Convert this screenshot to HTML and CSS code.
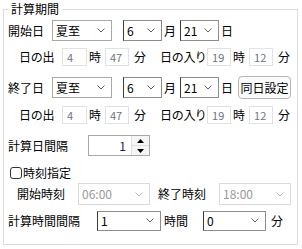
FILE: index.html
```html
<!DOCTYPE html>
<html lang="ja">
<head>
  <meta charset="UTF-8" />
  <title>計算期間</title>
  <link rel="stylesheet" href="styles.css">
</head>
<body>

<fieldset class="period">
  <legend>計算期間</legend>

  <div class="row date">
    <span class="label w-date">開始日</span>
    <span class="combo term"><span class="val">夏至</span><svg class="chev" width="8" height="5" viewBox="0 0 8 5"><path d="M0.5 0.5 L4 4 L7.5 0.5" /></svg></span>
    <span class="combo edit month"><span class="val">6</span><svg class="chev" width="8" height="5" viewBox="0 0 8 5"><path d="M0.5 0.5 L4 4 L7.5 0.5" /></svg></span>
    <span class="unit">月</span>
    <span class="combo edit day"><span class="val">21</span><svg class="chev" width="8" height="5" viewBox="0 0 8 5"><path d="M0.5 0.5 L4 4 L7.5 0.5" /></svg></span>
    <span class="unit">日</span>
  </div>

  <div class="row sun">
    <span class="label w-rise">日の出</span>
    <span class="numbox">4</span>
    <span class="unit">時</span>
    <span class="numbox">47</span>
    <span class="unit min">分</span>
    <span class="label w-set">日の入り</span>
    <span class="numbox">19</span>
    <span class="unit">時</span>
    <span class="numbox">12</span>
    <span class="unit min">分</span>
  </div>

  <div class="row date end">
    <span class="label w-date">終了日</span>
    <span class="combo term"><span class="val">夏至</span><svg class="chev" width="8" height="5" viewBox="0 0 8 5"><path d="M0.5 0.5 L4 4 L7.5 0.5" /></svg></span>
    <span class="combo edit month"><span class="val">6</span><svg class="chev" width="8" height="5" viewBox="0 0 8 5"><path d="M0.5 0.5 L4 4 L7.5 0.5" /></svg></span>
    <span class="unit">月</span>
    <span class="combo edit day"><span class="val">21</span><svg class="chev" width="8" height="5" viewBox="0 0 8 5"><path d="M0.5 0.5 L4 4 L7.5 0.5" /></svg></span>
    <span class="unit">日</span>
    <button class="btn">同日設定</button>
  </div>

  <div class="row sun last">
    <span class="label w-rise">日の出</span>
    <span class="numbox">4</span>
    <span class="unit">時</span>
    <span class="numbox">47</span>
    <span class="unit min">分</span>
    <span class="label w-set">日の入り</span>
    <span class="numbox">19</span>
    <span class="unit">時</span>
    <span class="numbox">12</span>
    <span class="unit min">分</span>
  </div>

  <div class="row interval">
    <span class="label w-interval">計算日間隔</span>
    <span class="spin">
      <span class="spin-val">1</span>
      <span class="spin-btns">
        <span class="spin-btn"><svg width="7" height="4" viewBox="0 0 7 4"><path d="M0 4 L3.5 0 L7 4 Z" /></svg></span>
        <span class="spin-btn"><svg width="7" height="4" viewBox="0 0 7 4"><path d="M0 0 L3.5 4 L7 0 Z" /></svg></span>
      </span>
    </span>
  </div>

  <label class="row check">
    <span class="box"></span>
    <span>時刻指定</span>
  </label>

  <div class="row time">
    <span class="label w-time">開始時刻</span>
    <span class="combo off"><span class="val">06:00</span><svg class="chev" width="8" height="5" viewBox="0 0 8 5"><path d="M0.5 0.5 L4 4 L7.5 0.5" /></svg></span>
    <span class="label w-time end-time">終了時刻</span>
    <span class="combo off"><span class="val">18:00</span><svg class="chev" width="8" height="5" viewBox="0 0 8 5"><path d="M0.5 0.5 L4 4 L7.5 0.5" /></svg></span>
  </div>

  <div class="row step">
    <span class="label w-step">計算時間間隔</span>
    <span class="combo edit hour"><span class="val">1</span><svg class="chev" width="8" height="5" viewBox="0 0 8 5"><path d="M0.5 0.5 L4 4 L7.5 0.5" /></svg></span>
    <span class="unit hours">時間</span>
    <span class="combo edit minute"><span class="val">0</span><svg class="chev" width="8" height="5" viewBox="0 0 8 5"><path d="M0.5 0.5 L4 4 L7.5 0.5" /></svg></span>
    <span class="unit min">分</span>
  </div>
</fieldset>

</body>
</html>
```

FILE: styles.css
```css
body { margin: 0; background: #fff; color: #000; font-family: "Noto Sans CJK JP", "Noto Sans", sans-serif; font-size: 12px; line-height: 16px; font-feature-settings: "palt"; }

.period { margin: 1px 4px 0 3px; padding: 3px 6px 13px 4px; border: 1px solid #dcdcdc; }
.period legend { padding: 0 3px; }

.row { display: flex; align-items: center; height: 21px; }
.row.sun { height: 18px; margin-top: 7px; }
.row.sun.last { margin-top: 8px; }
.row.date.end { margin-top: 11px; }
.row.interval { margin-top: 11px; }
.row.check { height: 20px; margin-top: 7px; }
.row.time { height: 22px; }
.row.step { margin-top: 5px; }

.label { flex: none; }
.w-date { width: 44px; }
.w-rise { width: 43px; margin-left: 11px; }
.w-set { width: 47px; margin-left: 14px; }
.w-interval { width: 80px; }
.w-time { width: 61px; margin-left: 9px; }
.w-time.end-time { margin-left: 8px; }
.w-step { width: 89px; }

.unit { margin: 0 4px 0 2px; }
.unit.min { margin: 0 0 0 5px; }
.unit.hours { margin: 0 15px 0 3px; }

.combo { display: flex; align-items: center; box-sizing: border-box; height: 21px; padding-left: 3px; border: 1px solid #a9a9a9; background: #fff; }
.combo .chev { margin-left: auto; margin-right: 6px; }
.combo .chev path { fill: none; stroke: #606060; }
.combo.edit { border-color: #8c8c8c; border-left-color: #3c3c3c; }
.combo.term { width: 60px; }
.combo.month { width: 39px; margin-left: 11px; }
.combo.day { width: 39px; }
.combo.off { width: 72px; height: 22px; border-color: #dadada; color: #9a9a9a; }
.combo.off .chev path { stroke: #b8b8b8; }
.combo.hour { width: 64px; height: 20px; }
.combo.minute { width: 63px; height: 20px; }

.numbox { box-sizing: border-box; width: 24px; height: 18px; padding-left: 4px; border: 1px solid #e2e2e2; color: #6f7480; font-size: 11px; line-height: 16px; }
.w-rise + .numbox { width: 25px; }

.btn { box-sizing: border-box; width: 53px; height: 23px; margin-left: 1px; padding: 0; border: 1px solid #b5b5b5; border-radius: 4px; background: #fbfbfb; font: inherit; color: #000; }

.spin { display: flex; box-sizing: border-box; width: 62px; height: 21px; border: 1px solid #a9a9a9; background: #fff; }
.spin-val { flex: 1; text-align: right; padding-right: 5px; color: #1a1a5a; line-height: 19px; }
.spin-btns { display: flex; flex-direction: column; width: 17px; border-left: 1px solid #e0e0e0; }
.spin-btn { flex: 1; display: flex; align-items: center; justify-content: center; background: #f6f6f6; border-bottom: 1px solid #e0e0e0; }
.spin-btn:last-child { border-bottom: none; }

.check .box { box-sizing: border-box; width: 12px; height: 12px; margin: 0 1px 0 2px; border: 1px solid #333; border-radius: 3px; background: #fff; }
```
